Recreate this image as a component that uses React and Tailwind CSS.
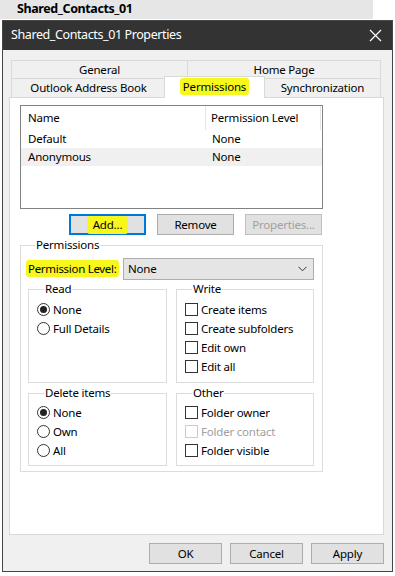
import React from "react";

const Btn = ({ children, className = "" }) => (
  <div className={`flex h-[21px] items-center justify-center border border-[#adadad] bg-[#e1e1e1] ${className}`}>
    {children}
  </div>
);

const Radio = ({ label, checked }) => (
  <div className="flex h-[19px] items-center whitespace-nowrap">
    <span className="flex h-[13px] w-[13px] items-center justify-center rounded-full border border-[#333333] bg-white">
      {checked && <span className="h-[7px] w-[7px] rounded-full bg-[#222222]" />}
    </span>
    <span className="ml-[3px]">{label}</span>
  </div>
);

const Check = ({ label, disabled }) => (
  <div className="flex h-[19px] items-center whitespace-nowrap">
    <span className={`h-[13px] w-[13px] border bg-white ${disabled ? "border-[#cccccc]" : "border-[#333333]"}`} />
    <span className={`ml-[3px] ${disabled ? "text-[#a0a0a0]" : ""}`}>{label}</span>
  </div>
);

const Group = ({ title, className = "", children }) => (
  <fieldset className={`border border-[#dcdcdc] ${className}`}>
    <legend className="ml-[7px] whitespace-nowrap px-[1px] leading-[16px]">{title}</legend>
    {children}
  </fieldset>
);

export default function App() {
  return (
    <div className="h-[576px] w-[395px] overflow-hidden bg-white font-['Noto_Sans',sans-serif] text-[11.5px] tracking-[-0.2px] text-black">
      {/* folder header behind the dialog */}
      <div className="flex h-[19px] w-[373px] items-center bg-[#e6e6e6] pl-[17px] text-[12.5px] font-bold leading-none tracking-[-0.4px]">
        Shared_Contacts_01
      </div>
      <div className="h-[1px]" />

      <div className="ml-[2px] flex h-[552px] w-[391px] flex-col border border-[#474747] bg-[#f0f0f0]">
        {/* title bar */}
        <div className="flex h-[29px] flex-none items-center justify-between bg-[#333333] pl-[8px] pr-[9px] text-[12.5px] tracking-[-0.4px] text-white">
          <span>Shared_Contacts_01 Properties</span>
          <svg width="13" height="13" viewBox="0 0 13 13" className="mr-[1px]">
            <path d="M1 1L12 12M12 1L1 12" stroke="#ffffff" strokeWidth="1.2" />
          </svg>
        </div>

        {/* tabs */}
        <div className="ml-[8px] mt-[10px] flex h-[37px] w-[370px] flex-col whitespace-nowrap">
          <div className="flex h-[18px]">
            <div className="flex w-[176px] items-center justify-center border-l border-t border-[#d9d9d9]">General</div>
            <div className="flex flex-1 items-center justify-center border-x border-t border-[#d9d9d9]">Home Page</div>
          </div>
          <div className="flex h-[19px]">
            <div className="flex w-[154px] items-center justify-center border-l border-t border-[#d9d9d9]">Outlook Address Book</div>
            <div className="relative z-10 -ml-[1px] -mt-[2px] flex h-[22px] w-[101px] items-start justify-center border-x border-t border-[#d9d9d9] bg-white">
              <span className="mt-[1px] rounded-[3px] bg-[#f7f71d] px-[3px] leading-[17px]">Permissions</span>
            </div>
            <div className="flex flex-1 items-center justify-center border-r border-t border-[#d9d9d9]">Synchronization</div>
          </div>
        </div>

        {/* tab page */}
        <div className="ml-[6px] flex h-[438px] w-[375px] flex-none flex-col border border-[#d9d9d9] bg-white pl-[10px] pt-[7px]">
          <div className="h-[104px] w-[303px] border border-[#828282] bg-white">
            <div className="flex h-[24px] items-center">
              <div className="flex h-full w-[185px] items-center border-r border-[#e5e5e5] pl-[7px]">Name</div>
              <div className="flex h-full w-[115px] items-center border-r border-[#e5e5e5] pl-[5px]">Permission Level</div>
            </div>
            <div className="flex h-[18px] items-center">
              <span className="w-[185px] pl-[7px]">Default</span>
              <span className="pl-[6px]">None</span>
            </div>
            <div className="flex h-[18px] items-center bg-[#f0f0f0]">
              <span className="w-[185px] pl-[7px]">Anonymous</span>
              <span className="pl-[6px]">None</span>
            </div>
          </div>

          <div className="mt-[5px] flex">
            <div className="ml-[49px] flex h-[21px] w-[77px] items-center justify-center border-2 border-[#0078d7] bg-[#e1e1e1]">
              <span className="rounded-[3px] bg-[#f7f71d] px-[6px] leading-[18px]">Add...</span>
            </div>
            <Btn className="ml-[11px] w-[77px]">Remove</Btn>
            <Btn className="ml-[11px] w-[77px] border-[#bfbfbf] bg-[#cccccc] text-[#a0a0a0]">Properties...</Btn>
          </div>

          <Group title="Permissions" className="mt-[2px] w-[303px] pb-[5px] pl-[7px] pr-[8px]">
            <div className="mt-[5px] flex h-[22px] items-center">
              <div className="w-[95px] whitespace-nowrap tracking-[-0.3px]">
                <span className="-ml-[2px] rounded-[3px] bg-[#f7f71d] px-[2px] py-[1px]">Permission Level:</span>
              </div>
              <div className="flex h-[22px] w-[191px] items-center justify-between border border-[#adadad] bg-[#e5e5e5] pl-[4px] pr-[6px]">
                <span>None</span>
                <svg width="9" height="6" viewBox="0 0 9 6">
                  <path d="M0.5 0.8L4.5 4.8L8.5 0.8" fill="none" stroke="#333333" strokeWidth="1" />
                </svg>
              </div>
            </div>

            <div className="mt-[1px] flex gap-[9px]">
              <Group title="Read" className="h-[102px] w-[139px] pl-[8px] pt-[3px]">
                <Radio label="None" checked />
                <Radio label="Full Details" />
              </Group>
              <Group title="Write" className="h-[102px] w-[138px] pl-[8px] pt-[3px]">
                <Check label="Create items" />
                <Check label="Create subfolders" />
                <Check label="Edit own" />
                <Check label="Edit all" />
              </Group>
            </div>

            <div className="mt-[2px] flex gap-[9px]">
              <Group title="Delete items" className="h-[81px] w-[139px] pl-[8px] pt-[2px]">
                <Radio label="None" checked />
                <Radio label="Own" />
                <Radio label="All" />
              </Group>
              <Group title="Other" className="h-[81px] w-[138px] pl-[8px] pt-[2px]">
                <Check label="Folder owner" />
                <Check label="Folder contact" disabled />
                <Check label="Folder visible" />
              </Group>
            </div>
          </Group>
        </div>

        {/* dialog buttons */}
        <div className="mt-[8px] flex justify-end gap-[8px] pr-[8px]">
          <Btn className="w-[73px]">OK</Btn>
          <Btn className="w-[73px]">Cancel</Btn>
          <Btn className="w-[73px]">Apply</Btn>
        </div>
      </div>
    </div>
  );
}
